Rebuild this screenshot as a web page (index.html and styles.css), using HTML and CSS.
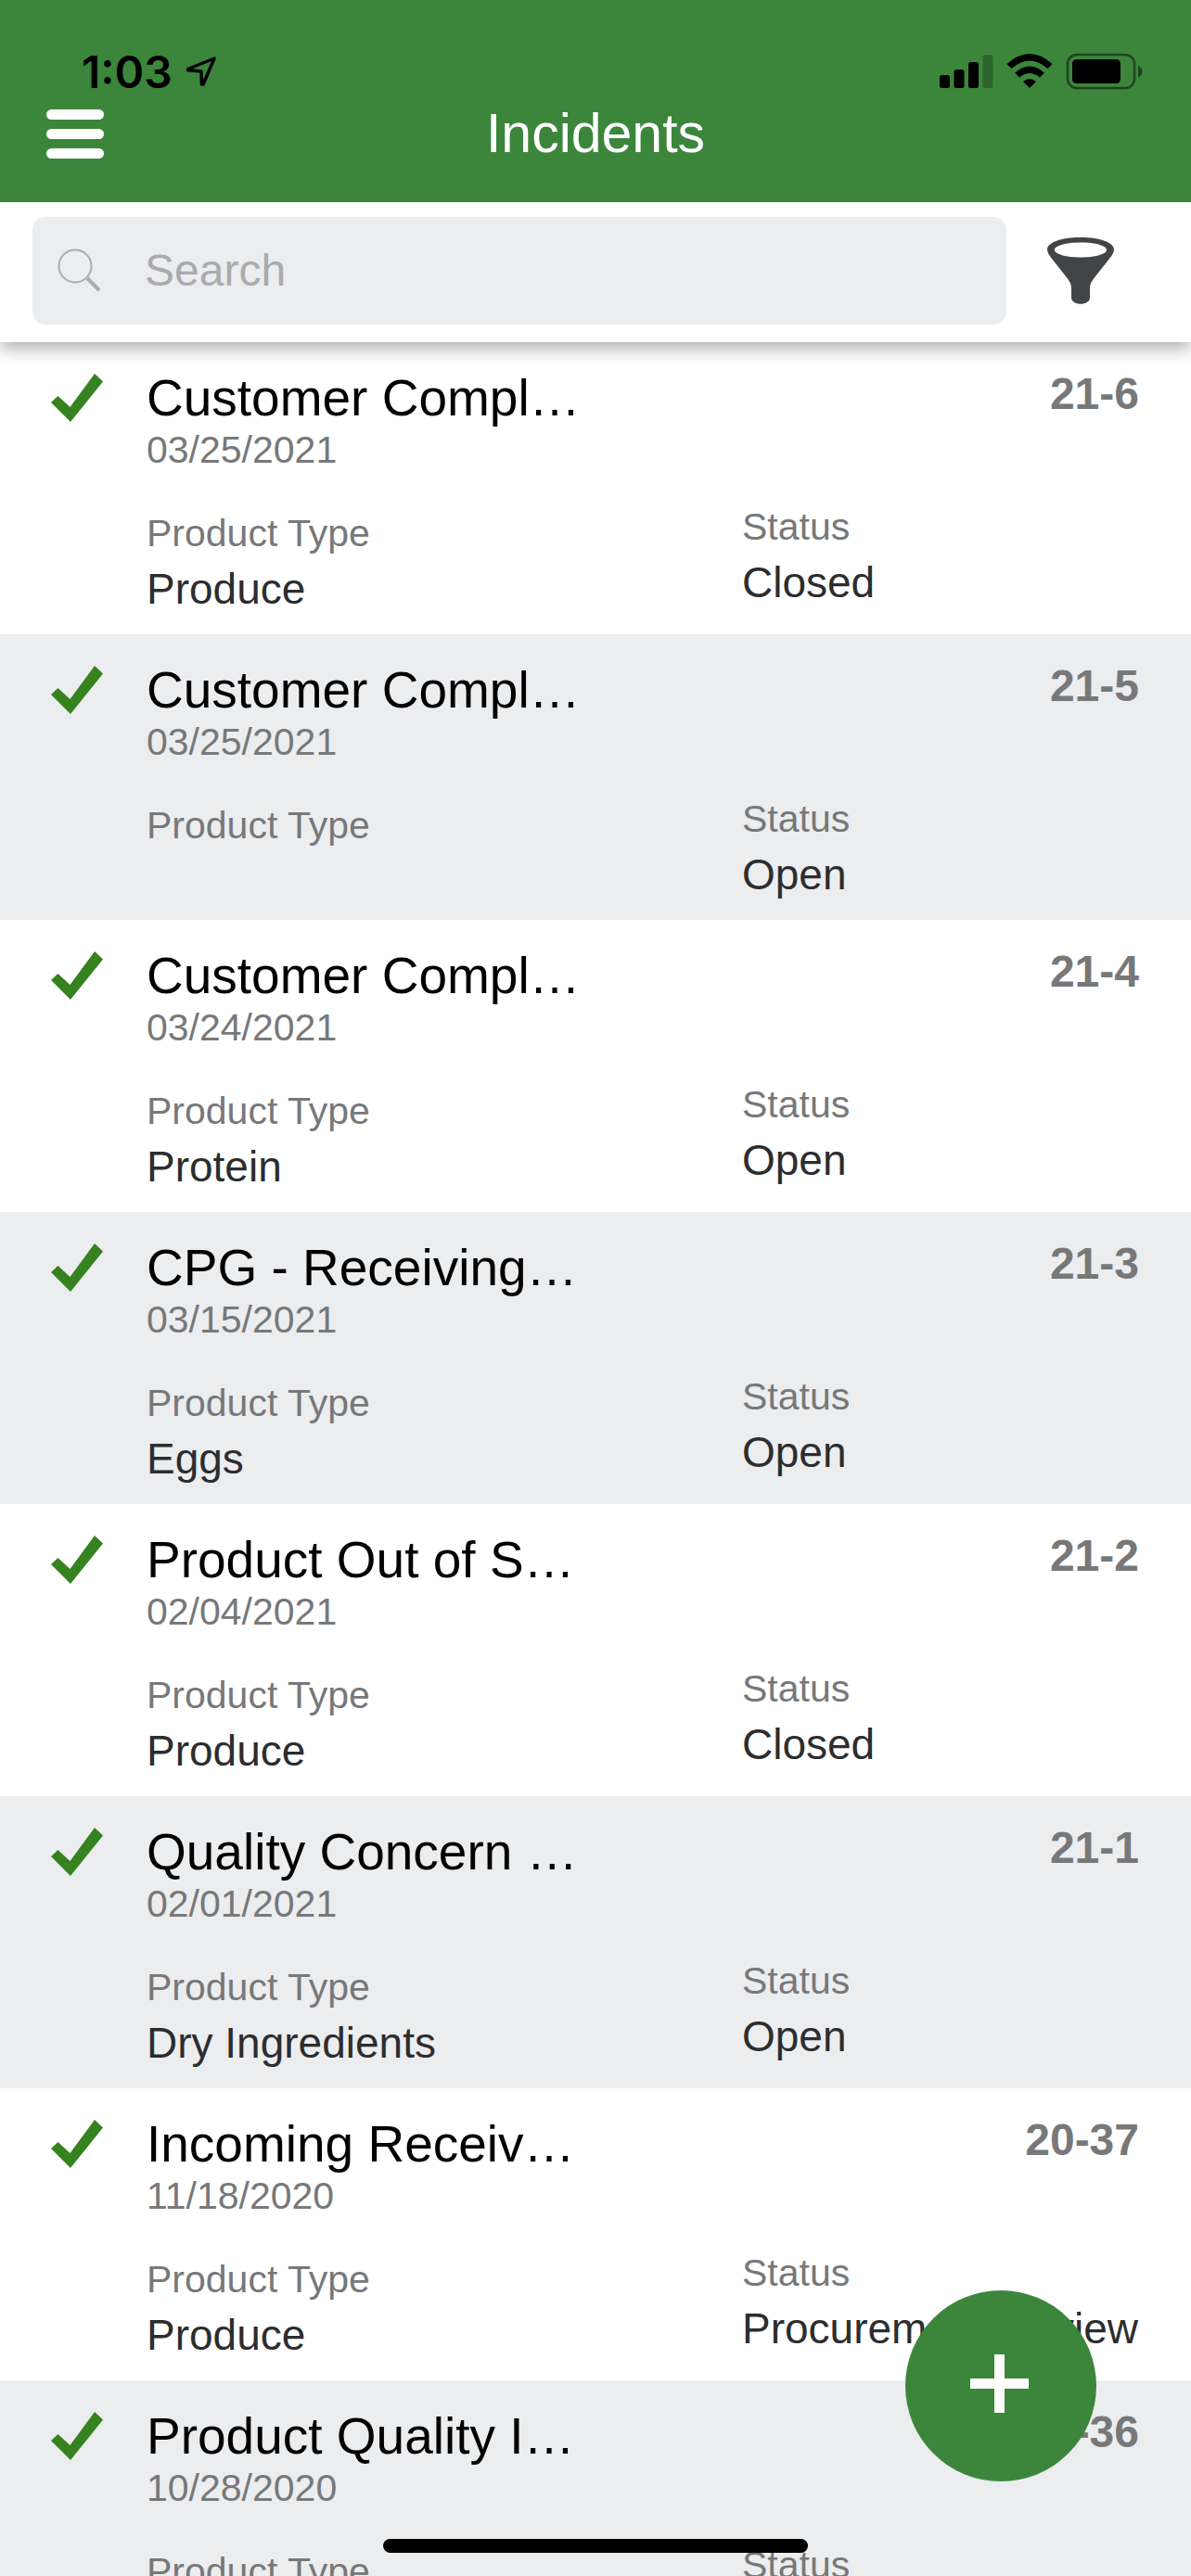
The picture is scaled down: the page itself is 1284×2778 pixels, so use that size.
FILE: index.html
```html
<!DOCTYPE html>
<html lang="en">
  <head>
    <meta charset="utf-8" />
    <meta name="viewport" content="width=device-width, initial-scale=1" />
    <title>Incidents</title>
    <link rel="stylesheet" href="styles.css">
  </head>
  <body>
    <svg width="0" height="0" class="sprite" aria-hidden="true">
      <symbol id="check" viewBox="0 0 56 52">
        <path d="M0 31 L7.500 24 L20.500 36 L47 0 L56 8.500 L21 52Z" fill="#35821f" />
      </symbol>
    </svg>

    <header class="header">
      <div class="status-bar">
        <span class="time">1:03</span>
        <svg class="location" width="34" height="34" viewBox="0 0 34 34" aria-hidden="true">
          <path d="M2.500 14.500 L31 3 L19 31 L17.500 31 L17 17 L2.500 15.500Z" fill="none" stroke="#000" stroke-width="3.500" stroke-linejoin="round" />
        </svg>
        <div class="indicators">
          <svg width="58" height="40" viewBox="0 0 58 40" aria-hidden="true">
            <rect x="0" y="24" width="11" height="14" rx="2.500" />
            <rect x="15.500" y="18" width="11" height="20" rx="2.500" />
            <rect x="31" y="10" width="11" height="28" rx="2.500" />
            <rect x="46.500" y="2" width="11" height="36" rx="2.500" opacity=".25" />
          </svg>
          <svg width="50" height="40" viewBox="0 0 50 40" aria-hidden="true">
            <path d="M0.500 12 Q25 -10 49.500 12 L44.500 17 Q25 0 5.500 17Z" />
            <path d="M9 21.500 Q25 7.500 41 21.500 L36 26.500 Q25 17.500 14 26.500Z" />
            <path d="M18 31 Q25 25 32 31 L25 38Z" />
          </svg>
          <svg width="84" height="40" viewBox="0 0 84 40" aria-hidden="true">
            <rect x="2" y="2" width="72" height="36" rx="10" fill="none" stroke="#000" stroke-width="2.500" opacity=".5" />
            <rect x="7" y="7" width="52" height="26" rx="4.500" />
            <path d="M78 14 Q82.500 16 82.500 20 Q82.500 24 78 26.500Z" opacity=".5" />
          </svg>
        </div>
      </div>
      <div class="nav">
        <button class="menu" aria-label="Menu">
          <span></span>
          <span></span>
          <span></span>
        </button>
        <h1>Incidents</h1>
      </div>
    </header>

    <form class="toolbar">
      <label class="search">
        <svg width="48" height="48" viewBox="0 0 48 48" fill="none" stroke="#a9abad" aria-hidden="true">
          <circle cx="19" cy="19" r="17.500" stroke-width="2" />
          <path d="M32 32 L45 45" stroke-width="4" />
        </svg>
        <input type="search" placeholder="Search" aria-label="Search">
      </label>
      <button class="filter" type="button" aria-label="Filter">
        <svg width="72" height="72" viewBox="0 0 72 72" aria-hidden="true">
          <path fill="#434446" fill-rule="evenodd" d="M36 0 C58 0 72 6 72 13 C72 16 70 19 67 23 L52 42 Q46 49 46 54 L46 65 C46 74 26 74 26 65 L26 54 Q26 49 20 42 L5 23 C2 19 0 16 0 13 C0 6 14 0 36 0Z M36 5.500 C20 5.500 8 9 8 13.500 C8 18 20 21.500 36 21.500 C52 21.500 64 18 64 13.500 C64 9 52 5.500 36 5.500Z" />
        </svg>
      </button>
    </form>

    <ul class="incidents">
      <li class="incident">
        <svg class="check" aria-hidden="true"><use href="#check" /></svg>
        <div class="details">
          <div class="summary">
            <h2>Customer Compl…</h2>
            <time>03/25/2021</time>
          </div>
          <span class="number">21-6</span>
          <dl class="product"><dt>Product Type</dt><dd>Produce</dd></dl>
          <dl><dt>Status</dt><dd>Closed</dd></dl>
        </div>
      </li>
      <li class="incident">
        <svg class="check" aria-hidden="true"><use href="#check" /></svg>
        <div class="details">
          <div class="summary">
            <h2>Customer Compl…</h2>
            <time>03/25/2021</time>
          </div>
          <span class="number">21-5</span>
          <dl class="product"><dt>Product Type</dt><dd></dd></dl>
          <dl><dt>Status</dt><dd>Open</dd></dl>
        </div>
      </li>
      <li class="incident">
        <svg class="check" aria-hidden="true"><use href="#check" /></svg>
        <div class="details">
          <div class="summary">
            <h2>Customer Compl…</h2>
            <time>03/24/2021</time>
          </div>
          <span class="number">21-4</span>
          <dl class="product"><dt>Product Type</dt><dd>Protein</dd></dl>
          <dl><dt>Status</dt><dd>Open</dd></dl>
        </div>
      </li>
      <li class="incident">
        <svg class="check" aria-hidden="true"><use href="#check" /></svg>
        <div class="details">
          <div class="summary">
            <h2>CPG - Receiving…</h2>
            <time>03/15/2021</time>
          </div>
          <span class="number">21-3</span>
          <dl class="product"><dt>Product Type</dt><dd>Eggs</dd></dl>
          <dl><dt>Status</dt><dd>Open</dd></dl>
        </div>
      </li>
      <li class="incident">
        <svg class="check" aria-hidden="true"><use href="#check" /></svg>
        <div class="details">
          <div class="summary">
            <h2>Product Out of S…</h2>
            <time>02/04/2021</time>
          </div>
          <span class="number">21-2</span>
          <dl class="product"><dt>Product Type</dt><dd>Produce</dd></dl>
          <dl><dt>Status</dt><dd>Closed</dd></dl>
        </div>
      </li>
      <li class="incident">
        <svg class="check" aria-hidden="true"><use href="#check" /></svg>
        <div class="details">
          <div class="summary">
            <h2>Quality Concern …</h2>
            <time>02/01/2021</time>
          </div>
          <span class="number">21-1</span>
          <dl class="product"><dt>Product Type</dt><dd>Dry Ingredients</dd></dl>
          <dl><dt>Status</dt><dd>Open</dd></dl>
        </div>
      </li>
      <li class="incident">
        <svg class="check" aria-hidden="true"><use href="#check" /></svg>
        <div class="details">
          <div class="summary">
            <h2>Incoming Receiv…</h2>
            <time>11/18/2020</time>
          </div>
          <span class="number">20-37</span>
          <dl class="product"><dt>Product Type</dt><dd>Produce</dd></dl>
          <dl><dt>Status</dt><dd>Procurement Review</dd></dl>
        </div>
      </li>
      <li class="incident">
        <svg class="check" aria-hidden="true"><use href="#check" /></svg>
        <div class="details">
          <div class="summary">
            <h2>Product Quality I…</h2>
            <time>10/28/2020</time>
          </div>
          <span class="number">20-36</span>
          <dl class="product"><dt>Product Type</dt><dd></dd></dl>
          <dl><dt>Status</dt><dd></dd></dl>
        </div>
      </li>
    </ul>

    <button class="add" aria-label="Add incident">
      <svg width="206" height="206" viewBox="0 0 206 206" aria-hidden="true">
        <path d="M101.500 69 V132 M70 100.500 H133" stroke="#fff" stroke-width="11" />
      </svg>
    </button>
    <div class="home-indicator"></div>
  </body>
</html>
```

FILE: styles.css
```css
*,
*::before,
*::after {
  box-sizing: border-box;
  margin: 0;
  padding: 0;
}

body {
  background-color: #fff;
  color: #2c2d2f;
  display: flex;
  flex-direction: column;
  font-family: "Liberation Sans", Arial, sans-serif;
  height: 100vh;
  overflow: hidden;
}

button {
  background: none;
  border: 0;
}

svg {
  display: block;
  flex: none;
}

.sprite {
  position: absolute;
}

/* Header */
.header {
  background-color: #3c863c;
  flex: none;
  padding-bottom: 40px;
}

.status-bar {
  align-items: center;
  color: #000;
  display: flex;
  height: 110px;
  padding: 44px 51px 0 88px;
}

.time {
  font-family: Inter, sans-serif;
  font-size: 48px;
  font-weight: 600;
}

.location {
  margin-left: 14px;
}

.indicators {
  display: flex;
  gap: 14px;
  margin-left: auto;
}

.nav {
  align-items: center;
  display: grid;
  grid-template-columns: 1fr auto 1fr;
  padding: 0 50px;
}

.menu {
  display: flex;
  flex-direction: column;
  gap: 10px;
  width: 62px;
}

.menu span {
  background-color: #fff;
  border-radius: 6px;
  height: 11px;
}

.nav h1 {
  color: #fff;
  font-size: 59px;
  font-weight: 400;
  line-height: 68px;
}

/* Search */
.toolbar {
  background-color: #fff;
  box-shadow: 0 6px 18px rgba(0, 0, 0, 0.35);
  clip-path: inset(0 0 -40px 0);
  display: flex;
  flex: none;
  padding: 16px 35px 19px;
  z-index: 1;
}

.search {
  align-items: center;
  background-color: #ecedef;
  border-radius: 14px;
  display: flex;
  flex: 1;
  gap: 46px;
  height: 116px;
  padding: 0 27px;
}

.search input {
  appearance: none;
  background: none;
  border: 0;
  color: #2c2d2f;
  flex: 1;
  font: 48px/56px "Liberation Sans", Arial, sans-serif;
  min-width: 0;
  outline: 0;
}

.search input::placeholder {
  color: #a9abad;
}

.filter {
  align-items: center;
  display: flex;
  justify-content: center;
  padding-right: 4px;
  width: 164px;
}

/* List */
.incidents {
  flex: 1;
  list-style: none;
  min-height: 0;
}

.incident {
  display: flex;
  gap: 47px;
  padding: 28px 56px 19px 55px;
}

.incident:nth-child(even) {
  background-color: #ecedef;
}

.check {
  height: 52px;
  margin-top: 6px;
  width: 56px;
}

.details {
  display: grid;
  flex: 1;
  grid-template-columns: 3fr 2fr;
  row-gap: 29px;
}

.incident h2 {
  color: #000;
  font-size: 55px;
  font-weight: 400;
  line-height: 64px;
  white-space: nowrap;
}

.incident time {
  color: #77787a;
  display: block;
  font-size: 41px;
  line-height: 48px;
}

.number {
  color: #77787a;
  font-size: 48px;
  font-weight: 700;
  line-height: 56px;
  text-align: right;
}

.product {
  margin-top: 7px;
}

.incident dt {
  color: #77787a;
  font-size: 41px;
  line-height: 60px;
}

.incident dd {
  font-size: 46px;
  line-height: 60px;
  white-space: nowrap;
}

/* Floating button */
.add {
  background-color: #3c863c;
  border-radius: 50%;
  bottom: 102px;
  height: 206px;
  position: fixed;
  right: 102px;
  width: 206px;
  z-index: 2;
}

.home-indicator {
  background-color: #000;
  border-radius: 8px;
  bottom: 25px;
  height: 15px;
  left: 50%;
  position: fixed;
  transform: translateX(-50%);
  width: 458px;
  z-index: 3;
}
```
